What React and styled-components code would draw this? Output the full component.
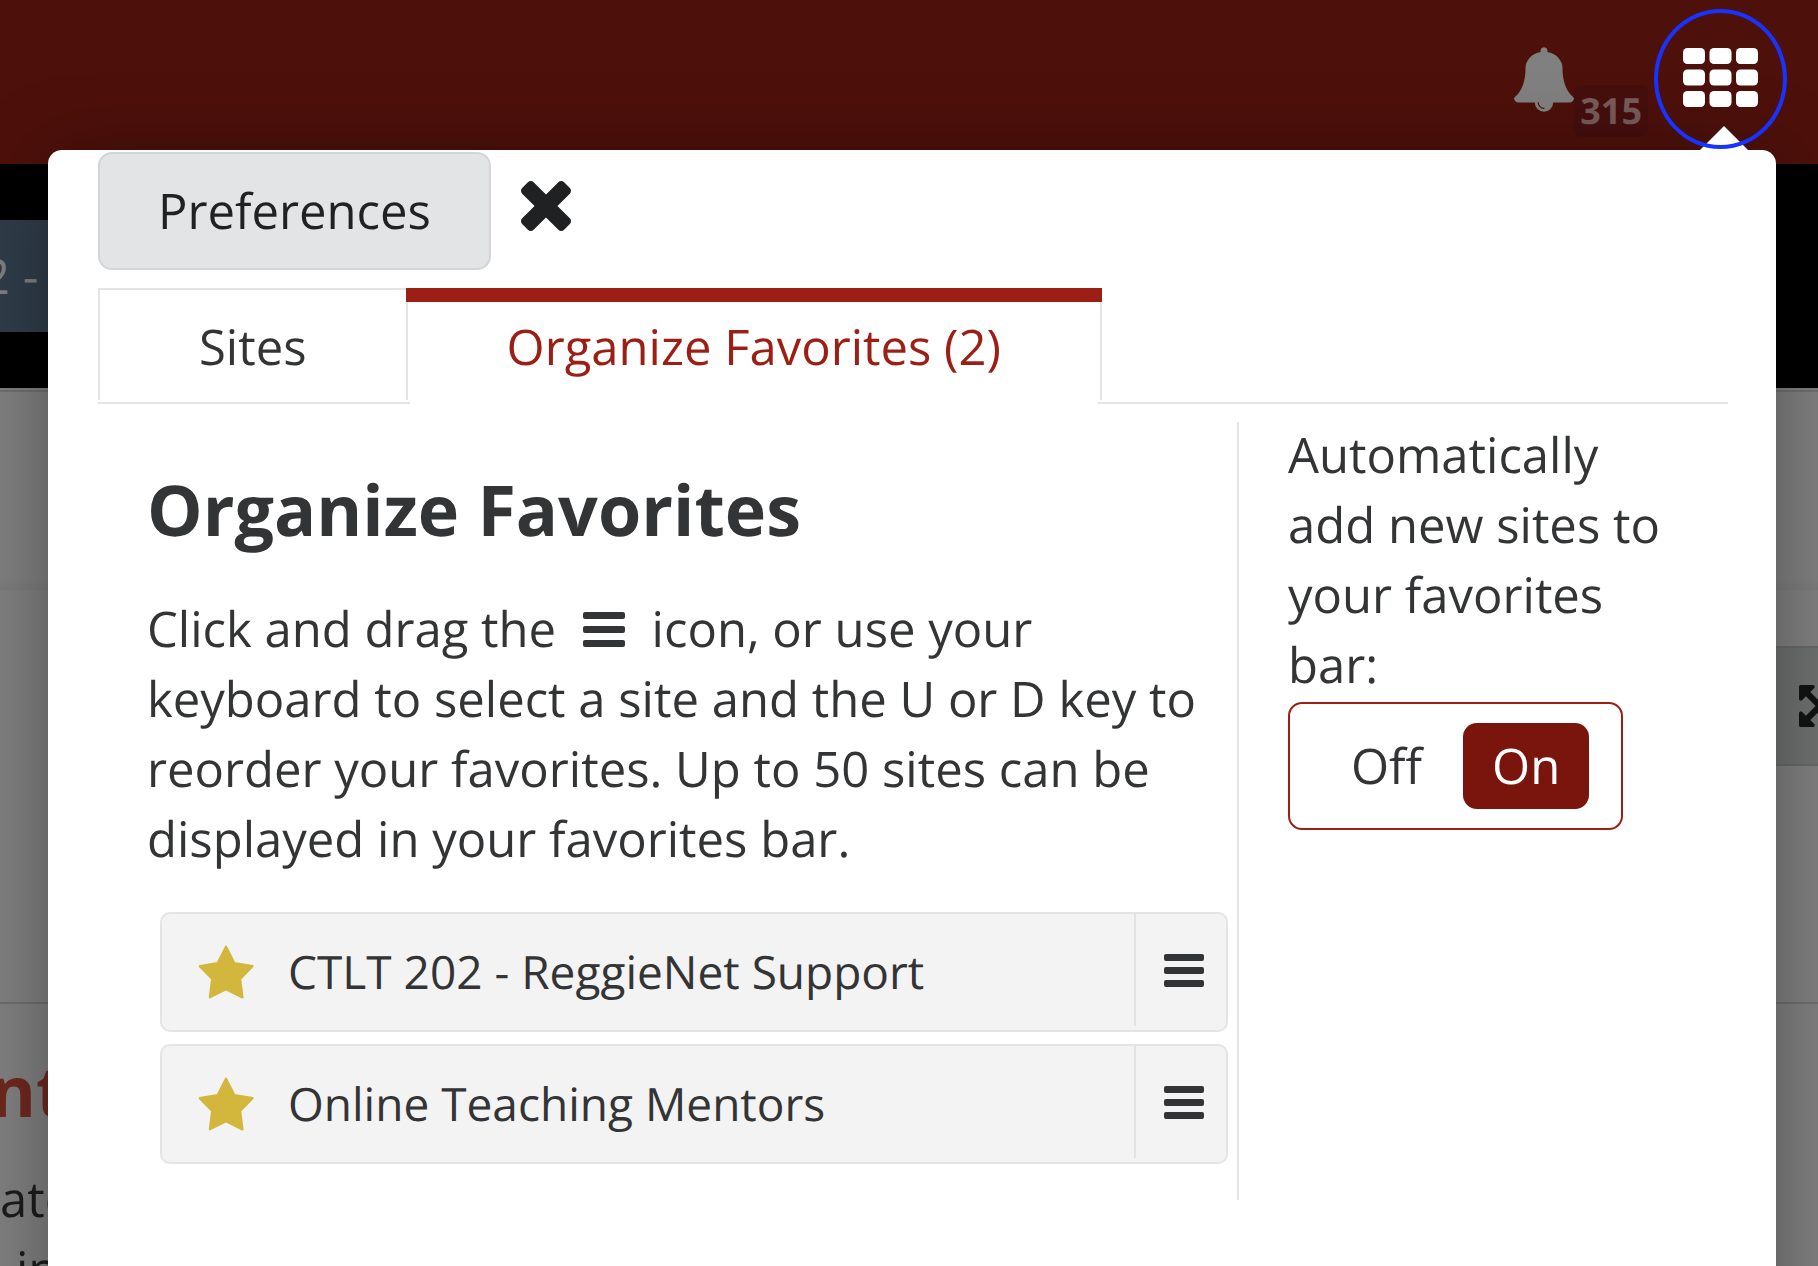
import React, { useState } from "react";
import styled, { createGlobalStyle } from "styled-components";

const GlobalStyle = createGlobalStyle`
  * {
    box-sizing: border-box;
  }
  body {
    margin: 0;
    font-family: "Open Sans", "Noto Sans", sans-serif;
    font-size: 49px;
    line-height: 70px;
    text-rendering: geometricPrecision;
    color: #333435;
  }
  button {
    font: inherit;
    color: inherit;
    text-rendering: inherit;
    cursor: pointer;
  }
`;

const Page = styled.div`
  position: relative;
  display: flex;
  flex-direction: column;
  height: 100vh;
  overflow: hidden;
  background: #808080;
`;

/* ---- dimmed page behind the panel ---- */

const Header = styled.header`
  display: flex;
  justify-content: flex-end;
  align-items: center;
  gap: 6px;
  flex: none;
  height: 164px;
  padding: 9px 31px 15px;
  background: #4e100b;
`;

const AlertsButton = styled.button`
  display: flex;
  align-items: center;
  height: 140px;
  padding: 0;
  border: 0;
  background: none;
`;

const Badge = styled.span`
  align-self: flex-end;
  margin-bottom: 12px;
  padding: 0 6px;
  border-radius: 8px;
  background: #450f0d;
  color: #785b5a;
  font-size: 36px;
  font-weight: 700;
  line-height: 52px;
`;

const AppsButton = styled.button`
  position: relative;
  z-index: 2;
  display: flex;
  align-items: center;
  justify-content: center;
  width: 133px;
  height: 140px;
  padding: 0 0 4px;
  border: 4px solid #1733ff;
  border-radius: 50%;
  background: none;
`;

const SiteNav = styled.nav`
  display: flex;
  align-items: center;
  flex: none;
  height: 224px;
  background: #000;
`;

const SiteTab = styled.a`
  width: 240px;
  height: 112px;
  margin-left: -18px;
  line-height: 112px;
  background: #303d4a;
  color: #808080;
  text-decoration: none;
`;

const Crumbs = styled.div`
  flex: none;
  height: 202px;
  border-top: 2px solid #808080;
  background: linear-gradient(#707070 2px, #808080 2px, #808080 190px, #7b7b7b);
`;

const ToolArea = styled.div`
  display: flex;
  justify-content: flex-end;
  align-items: flex-start;
  flex: none;
  height: 414px;
  padding-top: 56px;
  border-bottom: 2px solid #6e6e6e;
`;

const ToolBar = styled.div`
  display: flex;
  justify-content: flex-end;
  align-items: center;
  width: 240px;
  height: 120px;
  overflow: hidden;
  border: solid #676867;
  border-width: 2px 0;
  background: #6e716f;
`;

const ExpandButton = styled.button`
  display: flex;
  margin-right: -23px;
  padding: 0;
  border: 0;
  background: none;
`;

const Article = styled.section`
  padding-top: 46px;
  color: #1b1c1c;
  white-space: nowrap;
`;

const ArticleTitle = styled.h1`
  margin: 0 0 34px -10px;
  font-size: 70px;
  line-height: 80px;
  color: #6e281f;
`;

const ArticleLine = styled.p`
  margin: 0;
  padding-left: ${(p) => (p.$indent ? 16 : 0)}px;
`;

/* ---- panel ---- */

const Panel = styled.main`
  position: absolute;
  top: 150px;
  left: 48px;
  right: 42px;
  min-height: 100vh;
  padding: 2px 48px 0 50px;
  border-radius: 14px;
  background: #fff;
  box-shadow: 0 10px 80px rgba(0, 0, 0, 0.36);
`;

const Caret = styled.span`
  position: absolute;
  top: -24px;
  right: 28px;
  border: solid transparent;
  border-width: 0 24px 24px;
  border-bottom-color: #fff;
`;

const PanelBar = styled.div`
  display: flex;
  align-items: center;
  gap: 30px;
  margin-bottom: 18px;
`;

const PreferencesButton = styled.button`
  padding: 22px 58px;
  border: 2px solid #d3d5d7;
  border-radius: 14px;
  background: #e3e4e6;
  color: #1f2122;
`;

const CloseButton = styled.button`
  display: flex;
  padding: 0 0 10px;
  border: 0;
  background: none;
`;

const TabList = styled.div`
  display: flex;
  padding-bottom: 2px;
  border-bottom: 2px solid #e3e4e5;
`;

const Tab = styled.button`
  position: relative;
  padding: 22px 99px 18px;
  border: solid #e3e4e5;
  border-width: 2px 0 0 2px;
  background: #fff;

  &[aria-selected="true"] {
    border-width: 2px 2px 0;
    color: #9c1f15;
  }

  &[aria-selected="true"]::before {
    content: "";
    position: absolute;
    top: -2px;
    left: -2px;
    right: -2px;
    height: 14px;
    background: #9c1f15;
  }

  /* hides the line under the open tab */
  &[aria-selected="true"]::after {
    content: "";
    position: absolute;
    bottom: -4px;
    left: 2px;
    right: 2px;
    height: 4px;
    background: #fff;
  }
`;

const Columns = styled.div`
  display: grid;
  grid-template-columns: 7fr 3fr;
  margin-top: 16px;
`;

const Favorites = styled.section`
  margin-top: 2px;
  padding: 47px 9px 36px 49px;
  border-right: 2px solid #e3e4e5;
`;

const Title = styled.h2`
  margin: 0 0 45px;
  font-size: 70px;
  font-weight: 700;
  line-height: 80px;
`;

const Intro = styled.p`
  margin: 0;

  svg {
    margin: 0 14px;
  }
`;

const SiteList = styled.ul`
  display: grid;
  gap: 12px;
  margin: 38px 0 0 13px;
  padding: 0;
  list-style: none;
`;

const SiteRow = styled.li`
  display: flex;
  align-items: center;
  gap: 34px;
  height: 120px;
  padding-left: 36px;
  border: 2px solid #e3e4e5;
  border-radius: 10px;
  background: #f3f3f3;
  font-size: 46px;
  line-height: 64px;
`;

const IconButton = styled.button`
  display: flex;
  padding: 0;
  border: 0;
  background: none;
`;

const SiteName = styled.span`
  flex: 1;
`;

const DragHandle = styled.button`
  display: flex;
  align-items: center;
  justify-content: center;
  width: 92px;
  height: 112px;
  margin-bottom: 4px;
  padding: 0 0 0 6px;
  border: 0;
  border-left: 2px solid #e0e2e4;
  background: none;
  cursor: grab;
`;

const AutoAdd = styled.fieldset`
  min-width: 0;
  margin: 0;
  padding: 0 44px 0 49px;
  border: 0;
`;

const Legend = styled.legend`
  margin-bottom: 2px;
  padding: 0;
`;

const Toggle = styled.div`
  display: inline-flex;
  gap: 12px;
  padding: 19px 32px;
  border: 2px solid #9c1f15;
  border-radius: 14px;
`;

const Option = styled.label`
  position: relative;
  padding: 8px 29px;
  border-radius: 14px;
  background: ${(p) => (p.$on ? "#7a150e" : "transparent")};
  color: ${(p) => (p.$on ? "#fff" : "inherit")};
  cursor: pointer;

  input {
    position: absolute;
    inset: 0;
    margin: 0;
    opacity: 0;
  }
`;

/* ---- icons ---- */

const Bell = () => (
  <svg width="60" height="65" viewBox="64 0 1664 1792" fill="#808080" aria-hidden="true">
    <path d="M912 1696q0-16-16-16-59 0-101.5-42.5t-42.5-101.5q0-16-16-16t-16 16q0 73 51.5 124.5t124.5 51.5q16 0 16-16zm816-288q0 52-38 90t-90 38h-448q0 106-75 181t-181 75-181-75-75-181h-448q-52 0-90-38t-38-90q50-42 91-88t85-119.5 74.5-158.5 50-206 19.5-260q0-152 117-282.5t307-158.5q-8-19-8-39 0-40 28-68t68-28 68 28 28 68q0 20-8 39 190 28 307 158.5t117 282.5q0 139 19.5 260t50 206 74.5 158.5 85 119.5 91 88z" />
  </svg>
);

const AppGrid = () => (
  <svg width="75" height="59" viewBox="0 0 75 59" fill="#fff" aria-hidden="true">
    {[0, 21.5, 43].map((y) =>
      [0, 26.5, 53].map((x) => (
        <rect key={`${x}-${y}`} x={x} y={y} width="22" height="16" rx="4.5" />
      ))
    )}
  </svg>
);

const Cross = () => (
  <svg width="50" height="50" viewBox="302 302 1188 1188" fill="#1f2122" aria-hidden="true">
    <path d="M1490 1322q0 40-28 68l-136 136q-28 28-68 28t-68-28l-294-294-294 294q-28 28-68 28t-68-28l-136-136q-28-28-28-68t28-68l294-294-294-294q-28-28-28-68t28-68l136-136q28-28 68-28t68 28l294 294 294-294q28-28 68-28t68 28l136 136q28 28 28 68t-28 68l-294 294 294 294q28 28 28 68z" transform="translate(0 -64)" />
  </svg>
);

const Expand = () => (
  <svg width="42" height="42" viewBox="128 128 1536 1536" fill="#131313" aria-hidden="true">
    <path d="M1411 541l-355 355 355 355 144-144q29-31 70-14 39 17 39 59v448q0 26-19 45t-45 19h-448q-42 0-59-40-17-39 14-69l144-144-355-355-355 355 144 144q31 30 14 69-17 40-59 40h-448q-26 0-45-19t-19-45v-448q0-42 40-59 39-17 69 14l144 144 355-355-355-355-144 144q-19 19-45 19-12 0-24-5-40-17-40-59v-448q0-26 19-45t45-19h448q42 0 59 40 17 39-14 69l-144 144 355 355 355-355-144-144q-31-30-14-69 17-40 59-40h448q26 0 45 19t19 45v448q0 42-39 59-13 5-25 5-26 0-45-19z" />
  </svg>
);

const Bars = ({ width, height }) => (
  <svg width={width} height={height} fill="#333435" aria-hidden="true">
    {[0, (height - 7) / 2, height - 7].map((y) => (
      <rect key={y} y={y} width={width} height="7" rx="2" />
    ))}
  </svg>
);

const Star = () => (
  <svg width="56" height="54" viewBox="26 41 166 161" aria-hidden="true">
    <path
      d="M109 46L134 95.500L188 104L151 142L158 197L109 173L61 197L68 142L31 104L84 95.500Z"
      fill="#d3b73d"
      stroke="#d3b73d"
      strokeWidth="7"
      strokeLinejoin="round"
    />
  </svg>
);

const sites = ["CTLT 202 - ReggieNet Support", "Online Teaching Mentors"];

export default function App() {
  const [tab, setTab] = useState("favorites");
  const [autoAdd, setAutoAdd] = useState("On");

  return (
    <Page>
      <GlobalStyle />
      <Header>
        <AlertsButton type="button">
          <Bell />
          <Badge>315</Badge>
        </AlertsButton>
        <AppsButton type="button" aria-label="Sites">
          <AppGrid />
        </AppsButton>
      </Header>
      <SiteNav>
        <SiteTab href="#site">2 -</SiteTab>
      </SiteNav>
      <Crumbs />
      <ToolArea>
        <ToolBar>
          <ExpandButton type="button" aria-label="Expand">
            <Expand />
          </ExpandButton>
        </ToolBar>
      </ToolArea>
      <Article>
        <ArticleTitle>nt</ArticleTitle>
        <ArticleLine>ate</ArticleLine>
        <ArticleLine $indent>in</ArticleLine>
      </Article>

      <Panel>
        <Caret />
        <PanelBar>
          <PreferencesButton type="button">Preferences</PreferencesButton>
          <CloseButton type="button" aria-label="Close">
            <Cross />
          </CloseButton>
        </PanelBar>
        <TabList role="tablist">
          <Tab
            type="button"
            role="tab"
            aria-selected={tab === "sites"}
            onClick={() => setTab("sites")}
          >
            Sites
          </Tab>
          <Tab
            type="button"
            role="tab"
            aria-selected={tab === "favorites"}
            onClick={() => setTab("favorites")}
          >
            Organize Favorites ({sites.length})
          </Tab>
        </TabList>
        <Columns>
          <Favorites>
            <Title>Organize Favorites</Title>
            <Intro>
              Click and drag the <Bars width={42} height={35} /> icon, or use
              your keyboard to select a site and the U or D key to reorder your
              favorites. Up to 50 sites can be displayed in your favorites bar.
            </Intro>
            <SiteList>
              {sites.map((name) => (
                <SiteRow key={name}>
                  <IconButton type="button" aria-label={`Favorite ${name}`}>
                    <Star />
                  </IconButton>
                  <SiteName>{name}</SiteName>
                  <DragHandle type="button" aria-label={`Move ${name}`}>
                    <Bars width={40} height={33} />
                  </DragHandle>
                </SiteRow>
              ))}
            </SiteList>
          </Favorites>
          <AutoAdd>
            <Legend>Automatically add new sites to your favorites bar:</Legend>
            <Toggle>
              {["Off", "On"].map((value) => (
                <Option key={value} $on={autoAdd === value}>
                  <input
                    type="radio"
                    name="autoAdd"
                    value={value}
                    checked={autoAdd === value}
                    onChange={() => setAutoAdd(value)}
                  />
                  {value}
                </Option>
              ))}
            </Toggle>
          </AutoAdd>
        </Columns>
      </Panel>
    </Page>
  );
}
